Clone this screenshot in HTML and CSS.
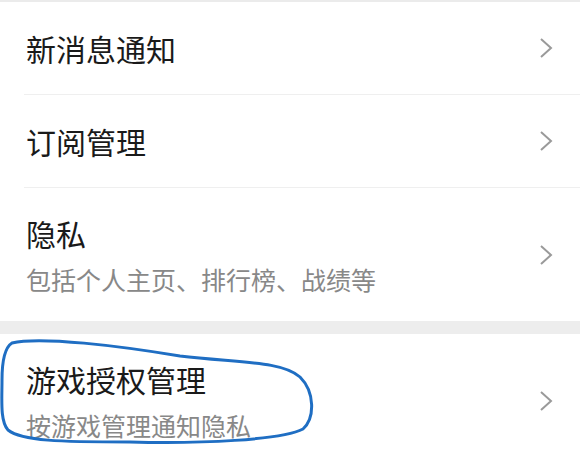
FILE: index.html
```html
<!DOCTYPE html>
<html lang="zh">
<head>
  <meta charset="UTF-8" />
  <meta name="viewport" content="width=device-width, initial-scale=1" />
  <title>设置</title>
  <link rel="stylesheet" href="styles.css">
</head>
<body>
  <div class="page">
    <!-- 第一组 -->
    <div class="group">
      <div class="item">
        <div class="item-body">
          <div class="item-title">新消息通知</div>
        </div>
        <svg class="chevron" viewBox="0 0 14 22"><polyline points="2,2 12,11 2,20" /></svg>
      </div>
      <div class="item">
        <div class="item-body">
          <div class="item-title">订阅管理</div>
        </div>
        <svg class="chevron" viewBox="0 0 14 22"><polyline points="2,2 12,11 2,20" /></svg>
      </div>
      <div class="item item-tall">
        <div class="item-body">
          <div class="item-title">隐私</div>
          <div class="item-desc">包括个人主页、排行榜、战绩等</div>
        </div>
        <svg class="chevron" viewBox="0 0 14 22"><polyline points="2,2 12,11 2,20" /></svg>
      </div>
    </div>

    <div class="group-gap"></div>

    <!-- 第二组 -->
    <div class="group">
      <div class="item item-tall">
        <div class="item-body">
          <div class="item-title">游戏授权管理</div>
          <div class="item-desc">按游戏管理通知隐私</div>
        </div>
        <svg class="chevron" viewBox="0 0 14 22"><polyline points="2,2 12,11 2,20" /></svg>
      </div>
    </div>

    <!-- hand-drawn mark -->
    <svg class="scribble" viewBox="0 0 580 466">
      <path d="M 12 343 C 40 336, 120 346, 180 356 C 240 363, 282 361, 300 377 C 315 392, 315 418, 303 429 C 282 440, 200 444, 130 442 C 60 442, 22 441, 8 430 C 0 421, 2 400, 2 380 C 2 362, 4 348, 12 343 Z" />
    </svg>
  </div>
</body>
</html>
```

FILE: styles.css
```css
* {
  box-sizing: border-box;
}

body {
  margin: 0;
  font-family: "Noto Sans CJK SC", "Noto Sans", sans-serif;
  background: #fff;
  color: #1a1a1a;
}

.page {
  position: relative;
  width: 580px;
  height: 466px;
  overflow: hidden;
  border-top: 2px solid #ebebeb;
}

.group {
  background: #fff;
}

.group-gap {
  height: 13px;
  background: #ededed;
}

.item {
  display: flex;
  align-items: center;
  min-height: 93px;
  margin-left: 24px;
  padding: 0 27px 0 2px;
  border-bottom: 1px solid #efefef;
}

.group .item:last-child {
  border-bottom: none;
}

.item-tall {
  padding-top: 25px;
  padding-bottom: 25px;
  min-height: 133px;
}

.item-body {
  flex: 1;
}

.item-title {
  font-size: 30px;
  line-height: 40px;
}

.item-desc {
  margin-top: 9px;
  font-size: 25px;
  line-height: 34px;
  color: #888;
}

.chevron {
  width: 14px;
  height: 22px;
  fill: none;
  stroke: #9a9a9a;
  stroke-width: 2;
}

.scribble {
  position: absolute;
  top: -2px;
  left: 0;
  width: 580px;
  height: 466px;
  pointer-events: none;
  fill: none;
  stroke: #1f6ec3;
  stroke-width: 3;
  stroke-linejoin: round;
}
```
